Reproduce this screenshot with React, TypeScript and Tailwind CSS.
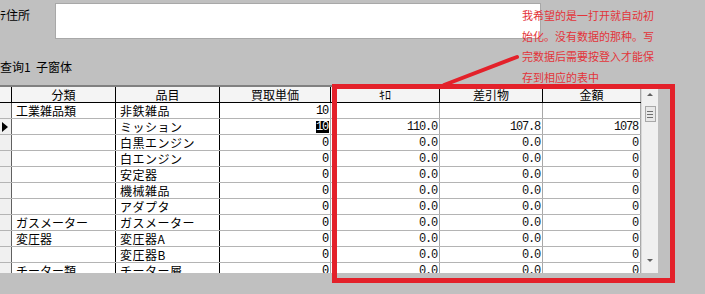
import React from "react";

const jp = { fontFamily: '"Noto Sans CJK JP", "Noto Sans CJK SC", sans-serif' };
const mono = { fontFamily: '"Liberation Mono", "DejaVu Sans Mono", monospace' };

type Row = {
  cat: string;
  item: string;
  price: string;
  kilo: string;
  diff: string;
  amount: string;
  current?: boolean;
};

const rows: Row[] = [
  { cat: "工業雑品類", item: "非鉄雑品", price: "10", kilo: "", diff: "", amount: "" },
  { cat: "", item: "ミッション", price: "10", kilo: "110.0", diff: "107.8", amount: "1078", current: true },
  { cat: "", item: "白黒エンジン", price: "0", kilo: "0.0", diff: "0.0", amount: "0" },
  { cat: "", item: "白エンジン", price: "0", kilo: "0.0", diff: "0.0", amount: "0" },
  { cat: "", item: "安定器", price: "0", kilo: "0.0", diff: "0.0", amount: "0" },
  { cat: "", item: "機械雑品", price: "0", kilo: "0.0", diff: "0.0", amount: "0" },
  { cat: "", item: "アダプタ", price: "0", kilo: "0.0", diff: "0.0", amount: "0" },
  { cat: "ガスメーター", item: "ガスメーター", price: "0", kilo: "0.0", diff: "0.0", amount: "0" },
  { cat: "変圧器", item: "変圧器A", price: "0", kilo: "0.0", diff: "0.0", amount: "0" },
  { cat: "", item: "変圧器B", price: "0", kilo: "0.0", diff: "0.0", amount: "0" },
  { cat: "チーター類", item: "チーター屑", price: "0", kilo: "0.0", diff: "0.0", amount: "0" },
];

const cols = "grid grid-cols-[12px_104px_104px_111px_109px_103px_98px]";

function HeaderCell({ children }: { children?: React.ReactNode }) {
  return (
    <div className="h-[15px] border-r border-black flex items-center justify-center text-[12px] leading-none text-black" style={jp}>
      {children}
    </div>
  );
}

function Num({ value }: { value: string }) {
  return (
    <div
      className="h-[15px] border-r border-[#a8a8a8] flex items-center justify-end pr-[2px] text-[12px] leading-none tracking-[-1.2px] text-[#111]"
      style={mono}
    >
      {value}
    </div>
  );
}

function Scrollbar() {
  return (
    <div className="w-[17px] h-full bg-[#f0f0f0] border-l border-[#d8d8d8] flex flex-col items-center">
      <div className="h-[15px] flex items-center justify-center">
        <div className="w-0 h-0 border-l-[3px] border-r-[3px] border-b-[3px] border-l-transparent border-r-transparent border-b-[#606060]" />
      </div>
      <div className="mt-[4px] w-[11px] h-[16px] border border-[#a8a8a8] bg-[#e8e8e8] flex flex-col items-center justify-center gap-[2px]">
        <div className="w-[6px] h-px bg-[#707070]" />
        <div className="w-[6px] h-px bg-[#707070]" />
        <div className="w-[6px] h-px bg-[#707070]" />
      </div>
      <div className="flex-1" />
      <div className="h-[18px] flex items-start justify-center pt-[4px]">
        <div className="w-0 h-0 border-l-[3px] border-r-[3px] border-t-[3px] border-l-transparent border-r-transparent border-t-[#606060]" />
      </div>
    </div>
  );
}

export default function App() {
  return (
    <div className="relative w-[705px] h-[294px] bg-[#c0c0c0] overflow-hidden text-black" style={jp}>
      {/* address field */}
      <div className="flex pt-[3px]">
        <div className="w-[55px] pt-[6px] text-[12px] leading-none" style={jp}>ﾃ住所</div>
        <div className="w-[486px] h-[36px] bg-white border border-[#a8a8a8]" />
      </div>

      {/* subform caption */}
      <div className="mt-[22px] h-[14px] text-[12px] leading-none" style={jp}>
        查询1&nbsp;&nbsp;子窗体
      </div>

      {/* datasheet */}
      <div className="mt-[10px] flex h-[188px] border-t-2 border-[#808080] w-[658px]">
        <div className="w-[641px] h-full overflow-hidden bg-white">
          <div className={`${cols} bg-[#f4f4f4] border-b border-black`}>
            <div className="h-[15px] border-r border-black" />
            <HeaderCell>分類</HeaderCell>
            <HeaderCell>品目</HeaderCell>
            <HeaderCell>買取単価</HeaderCell>
            <HeaderCell>ｷﾛ</HeaderCell>
            <HeaderCell>差引物</HeaderCell>
            <div className="h-[15px] border-r border-[#a8a8a8] flex items-center justify-center text-[12px] leading-none" style={jp}>金額</div>
          </div>
          {rows.map((r, i) => (
            <div key={i} className={`${cols} border-b border-[#b4b4b4]`}>
              <div className="h-[15px] bg-[#f0f0f0] border-r border-[#606060] flex items-center">
                {r.current && (
                  <div className="ml-[2px] w-0 h-0 border-t-[5px] border-b-[5px] border-l-[6px] border-t-transparent border-b-transparent border-l-black" />
                )}
              </div>
              <div className="h-[15px] border-r border-black pl-[4px] flex items-center text-[12px] leading-none" style={jp}>{r.cat}</div>
              <div className="h-[15px] border-r border-black pl-[4px] flex items-center text-[12px] leading-none tracking-[0.5px]" style={jp}>{r.item}</div>
              <div className="h-[15px] border-r border-[#a8a8a8] flex items-center justify-end pr-[1px] text-[12px] leading-none" style={mono}>
                <span className={`tracking-[-1.2px] pr-[1px] ${r.current ? "bg-black text-white" : ""}`}>{r.price}</span>
              </div>
              <Num value={r.kilo} />
              <Num value={r.diff} />
              <Num value={r.amount} />
            </div>
          ))}
        </div>
        <Scrollbar />
      </div>

      {/* annotation */}
      <div className="absolute left-[332px] top-[84px] w-[343px] h-[199px] border-[5px] border-[#e3212a]" />
      <svg className="absolute left-0 top-0" width="705" height="294">
        <line x1="444" y1="85" x2="517" y2="57" stroke="#e3212a" strokeWidth="4" strokeLinecap="round" />
      </svg>
      <div
        className="absolute left-[522px] top-[5px] w-[140px] text-[11px] leading-[20.5px] text-[#e3343a]"
        style={{ fontFamily: '"Noto Sans CJK SC", sans-serif' }}
      >
        <div>我希望的是一打开就自动初</div>
        <div>始化。没有数据的那种。写</div>
        <div>完数据后需要按登入才能保</div>
        <div>存到相应的表中</div>
      </div>
    </div>
  );
}
